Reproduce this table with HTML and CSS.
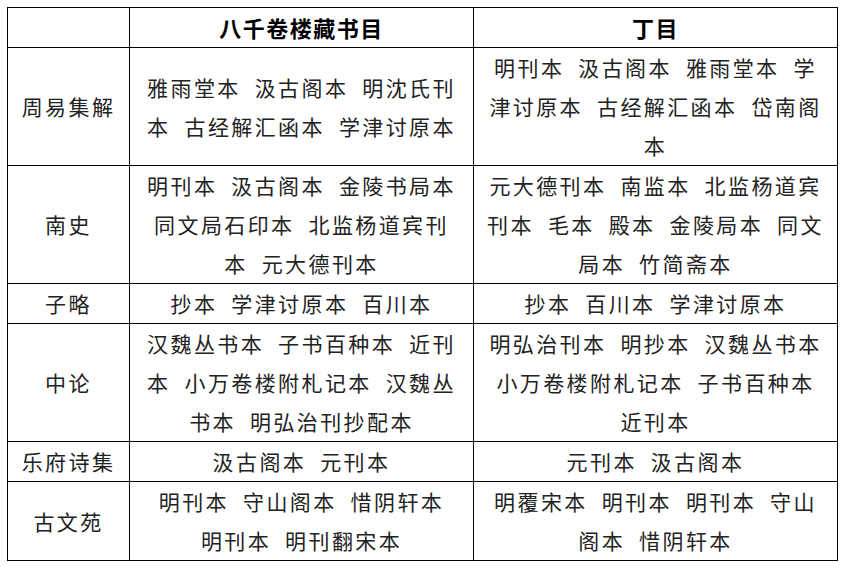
FILE: index.html
```html
<!DOCTYPE html>
<html lang="zh-CN">
<head>
<meta charset="utf-8">
<title>版本对照</title>
<link rel="stylesheet" href="styles.css">
</head>
<body>
<table class="edition-table">
  <colgroup>
    <col class="col-title">
    <col class="col-bqj">
    <col class="col-dm">
  </colgroup>
  <thead>
    <tr>
      <th class="cell-title"></th>
      <th class="cell-bqj">八千卷楼藏书目</th>
      <th class="cell-dm">丁目</th>
    </tr>
  </thead>
  <tbody>
    <tr>
      <td class="cell-title">周易集解</td>
      <td class="cell-bqj">雅雨堂本 汲古阁本 明沈氏刊本 古经解汇函本 学津讨原本</td>
      <td class="cell-dm">明刊本 汲古阁本 雅雨堂本 学津讨原本 古经解汇函本 岱南阁本</td>
    </tr>
    <tr>
      <td class="cell-title">南史</td>
      <td class="cell-bqj">明刊本 汲古阁本 金陵书局本 同文局石印本 北监杨道宾刊本 元大德刊本</td>
      <td class="cell-dm">元大德刊本 南监本 北监杨道宾刊本 毛本 殿本 金陵局本 同文局本 竹简斋本</td>
    </tr>
    <tr>
      <td class="cell-title">子略</td>
      <td class="cell-bqj">抄本 学津讨原本 百川本</td>
      <td class="cell-dm">抄本 百川本 学津讨原本</td>
    </tr>
    <tr>
      <td class="cell-title">中论</td>
      <td class="cell-bqj">汉魏丛书本 子书百种本 近刊本 小万卷楼附札记本 汉魏丛书本 明弘治刊抄配本</td>
      <td class="cell-dm">明弘治刊本 明抄本 汉魏丛书本 小万卷楼附札记本 子书百种本 近刊本</td>
    </tr>
    <tr>
      <td class="cell-title">乐府诗集</td>
      <td class="cell-bqj">汲古阁本 元刊本</td>
      <td class="cell-dm">元刊本 汲古阁本</td>
    </tr>
    <tr>
      <td class="cell-title">古文苑</td>
      <td class="cell-bqj">明刊本 守山阁本 惜阴轩本 明刊本 明刊翻宋本</td>
      <td class="cell-dm">明覆宋本 明刊本 明刊本 守山阁本 惜阴轩本</td>
    </tr>
  </tbody>
</table>
</body>
</html>
```

FILE: styles.css
```css
html, body {
  margin: 0;
  padding: 0;
  background: #ffffff;
}

body {
  padding: 7px 0 0 7px;
  font-family: "Noto Sans CJK SC", "Noto Sans", sans-serif;
}

.edition-table {
  border-collapse: collapse;
  table-layout: fixed;
  width: 830px;
}

.col-title { width: 122px; }
.col-bqj { width: 344px; }
.col-dm { width: 364px; }

.edition-table th,
.edition-table td {
  border: 1px solid #000000;
  padding: 0;
  text-align: center;
  vertical-align: middle;
  line-height: 39px;
}

.edition-table td {
  font-size: 21px;
  font-weight: 400;
  color: #222222;
  letter-spacing: 2.4px;
  word-spacing: 6.9px;
}

.edition-table th {
  font-size: 22px;
  font-weight: 700;
  color: #000000;
  letter-spacing: 1.5px;
}

.edition-table td.cell-title {
  padding: 0 6px;
}

.edition-table td.cell-bqj {
  padding: 0 16px;
}

.edition-table td.cell-dm {
  padding: 0 12px;
}
```
